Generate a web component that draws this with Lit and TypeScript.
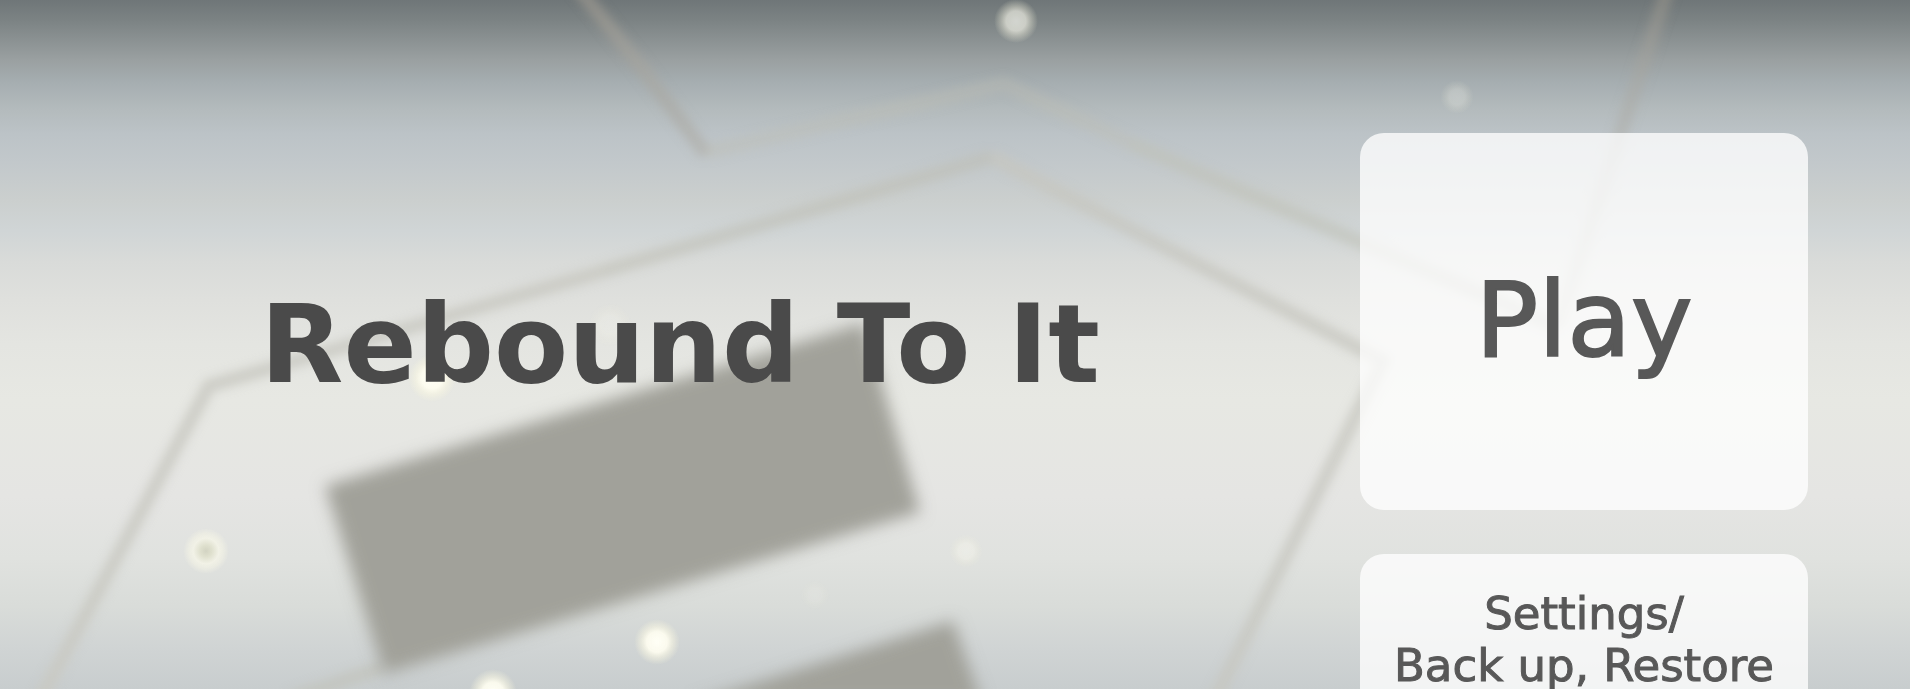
import { LitElement, html, css, svg } from "lit";
import { customElement } from "lit/decorators.js";

interface Glow {
  x: number;
  y: number;
  r: number;
  opacity: number;
}

const GLOWS: Glow[] = [
  { x: 1016, y: 21, r: 22, opacity: 0.66 },
  { x: 1457, y: 97, r: 17, opacity: 0.25 },
  { x: 432, y: 378, r: 24, opacity: 1 },
  { x: 657, y: 642, r: 23, opacity: 1 },
  { x: 493, y: 693, r: 24, opacity: 1 },
  { x: 966, y: 551, r: 17, opacity: 0.35 },
  { x: 815, y: 595, r: 15, opacity: 0.12 },
  { x: 610, y: 325, r: 22, opacity: 0.2 },
];

@customElement("menu-backdrop")
export class MenuBackdrop extends LitElement {
  static styles = css`
    :host {
      display: block;
      background: linear-gradient(
        #6f7678 0%,
        #7c8384 3%,
        #9aa0a1 8.7%,
        #a6aeb1 12%,
        #b4bbbd 16%,
        #bcc3c7 19.5%,
        #c2c8cb 23.5%,
        #cbcfce 29%,
        #d0d5d6 33.5%,
        #d9dbd9 38%,
        #dfe0dd 43.5%,
        #e4e5e1 50%,
        #e7e8e3 58%,
        #e5e5e3 72%,
        #e0e2df 81%,
        #d9dcd9 88%,
        #d0d4d4 94%,
        #c8cdce 100%
      );
    }
    .scene {
      display: block;
      width: 100%;
      height: 100%;
    }
  `;

  render() {
    return html`
      <svg class="scene" viewBox="0 0 1910 689" preserveAspectRatio="xMidYMid slice" aria-hidden="true">
        <defs>
          <filter id="soft" x="-10%" y="-10%" width="120%" height="120%">
            <feGaussianBlur stdDeviation="5" />
          </filter>
          <filter id="softer" x="-10%" y="-10%" width="120%" height="120%">
            <feGaussianBlur stdDeviation="8" />
          </filter>
          <radialGradient id="glow">
            <stop offset="0" stop-color="#fffff6" />
            <stop offset="0.45" stop-color="#fefdf0" stop-opacity="0.92" />
            <stop offset="0.7" stop-color="#f9f7e2" stop-opacity="0.5" />
            <stop offset="1" stop-color="#f5f4dc" stop-opacity="0" />
          </radialGradient>
          <radialGradient id="ring">
            <stop offset="0" stop-color="#d2d3c2" />
            <stop offset="0.25" stop-color="#dfe0ce" />
            <stop offset="0.55" stop-color="#f1f1e6" />
            <stop offset="0.75" stop-color="#f0f0e4" stop-opacity="0.7" />
            <stop offset="1" stop-color="#f0f0e4" stop-opacity="0" />
          </radialGradient>
          <linearGradient id="far" x1="0" y1="0" x2="0" y2="330" gradientUnits="userSpaceOnUse">
            <stop offset="0" stop-color="#93918a" />
            <stop offset="0.25" stop-color="#a8a9a5" />
            <stop offset="0.5" stop-color="#b6b7b4" />
            <stop offset="0.75" stop-color="#c4c5be" />
            <stop offset="1" stop-color="#cfcfc9" />
          </linearGradient>
        </defs>
        <g filter="url(#soft)" fill="none" stroke-width="14">
          <path d="M570 -22 L640 66 L706 154" stroke="url(#far)" opacity="0.85" />
          <path d="M706 152 L1004 84 L1130 143" stroke="#bdbeb2" opacity="0.38" />
          <path d="M1130 143 L1558 327" stroke="#c0c1b8" opacity="0.6" />
          <path d="M1558 325 L1669 -15" stroke="url(#far)" opacity="0.65" />
          <path d="M992 157 L600 272" stroke="#bdbeb5" opacity="0.55" />
          <path d="M600 272 L209 386 L38 703" stroke="#c9c9c2" opacity="0.8" />
          <path d="M992 157 L1383 361 L1213 703" stroke="#c6c6bf" opacity="0.72" />
          <path d="M384 667 L290 699" stroke="#c2c3bc" opacity="0.7" />
        </g>
        <g filter="url(#softer)" fill="#a1a19a">
          <path d="M325 486 L864 323 L920 512 L384 674 Z" />
          <path d="M690 704 L953 621 L982 704 Z" />
        </g>
        <circle cx="206" cy="551" r="23" fill="url(#ring)" />
        ${GLOWS.map(
          (g) => svg`<circle cx=${g.x} cy=${g.y} r=${g.r} fill="url(#glow)" opacity=${g.opacity} />`
        )}
      </svg>
    `;
  }
}

@customElement("app-root")
export class AppRoot extends LitElement {
  static styles = css`
    :host {
      display: block;
      position: relative;
      height: 100vh;
      overflow: hidden;
      font-family: "DejaVu Sans", Verdana, sans-serif;
    }
    .backdrop {
      position: absolute;
      inset: 0;
    }
    .layout {
      position: relative;
      display: grid;
      grid-template-columns: minmax(0, 1fr) minmax(320px, 448px);
      padding-right: 102px;
      height: 100%;
    }
    .hero {
      display: flex;
      align-items: center;
      justify-content: center;
      padding-bottom: 36px;
    }
    .title {
      margin: 0;
      color: #4a4a4a;
      font-size: 108px;
      line-height: 124px;
      font-weight: 700;
      white-space: nowrap;
    }
    .menu {
      display: flex;
      flex-direction: column;
      gap: 44px;
      padding-top: 133px;
    }
    .card {
      flex: none;
      border: 0;
      border-radius: 24px;
      background: rgba(255, 255, 255, 0.77);
      color: #585858;
      font-family: inherit;
      text-align: center;
      cursor: pointer;
      -webkit-text-stroke: 1px #585858;
    }
    .card:hover {
      background: rgba(255, 255, 255, 0.88);
    }
    .play {
      height: 377px;
      padding: 0 0 4px;
      font-size: 104px;
      line-height: 120px;
      -webkit-text-stroke-width: 2px;
    }
    .settings {
      padding: 34px 16px;
      font-size: 45px;
      line-height: 52px;
      white-space: nowrap;
    }
  `;

  render() {
    return html`
      <menu-backdrop class="backdrop"></menu-backdrop>
      <main class="layout">
        <div class="hero"><h1 class="title">Rebound To It</h1></div>
        <nav class="menu">
          <button class="card play" type="button">Play</button>
          <button class="card settings" type="button">Settings/<br />Back up, Restore</button>
        </nav>
      </main>
    `;
  }
}
